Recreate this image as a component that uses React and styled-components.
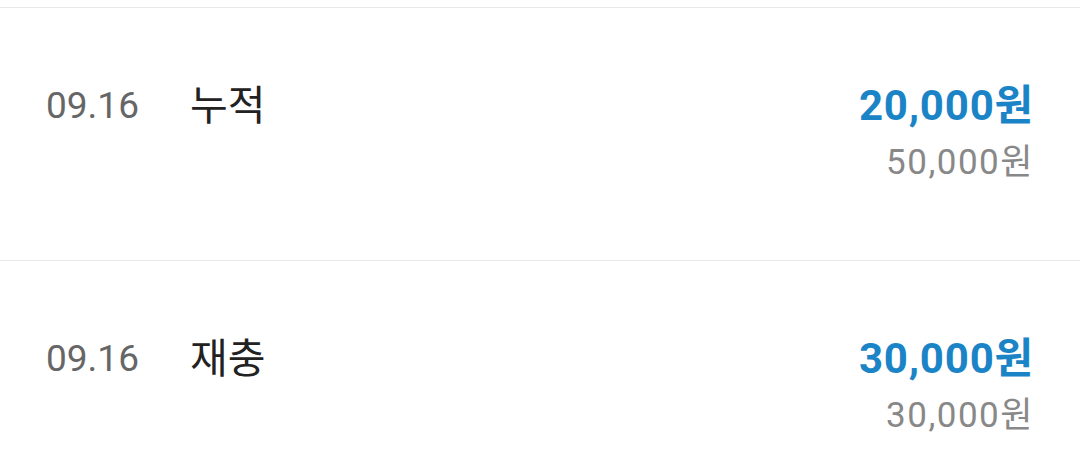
import React from 'react';
import styled, { createGlobalStyle } from 'styled-components';

const GlobalStyle = createGlobalStyle`
  body {
    margin: 0;
    background: #ffffff;
    font-family: Roboto, "Noto Sans CJK KR", sans-serif;
  }
`;

const List = styled.div`
  padding-top: 7px;
`;

const Row = styled.div`
  display: flex;
  align-items: flex-start;
  height: 253px;
  box-sizing: border-box;
  border-top: 1px solid #e8e8e8;
  padding: 73px 47px 0 46px;
`;

const DateText = styled.div`
  width: 144px;
  font-size: 37px;
  line-height: 50px;
  color: #666666;
`;

const Title = styled.div`
  flex: 1;
  font-size: 41px;
  line-height: 50px;
  color: #222222;
`;

const Amounts = styled.div`
  display: flex;
  flex-direction: column;
  align-items: flex-end;
`;

const Amount = styled.div`
  font-size: 42px;
  font-weight: 700;
  line-height: 50px;
  letter-spacing: 0.8px;
  margin-right: -1px;
  color: #1b84c6;
`;

const SubAmount = styled.div`
  font-size: 35px;
  line-height: 40px;
  margin-top: 12px;
  letter-spacing: 1.5px;
  margin-right: -1px;
  color: #888888;
`;

const items = [
  { date: '09.16', title: '누적', amount: '20,000원', total: '50,000원' },
  { date: '09.16', title: '재충', amount: '30,000원', total: '30,000원' },
];

export default function App() {
  return (
    <>
      <GlobalStyle />
      <List>
        {items.map((item, i) => (
          <Row key={i}>
            <DateText>{item.date}</DateText>
            <Title>{item.title}</Title>
            <Amounts>
              <Amount>{item.amount}</Amount>
              <SubAmount>{item.total}</SubAmount>
            </Amounts>
          </Row>
        ))}
      </List>
    </>
  );
}
